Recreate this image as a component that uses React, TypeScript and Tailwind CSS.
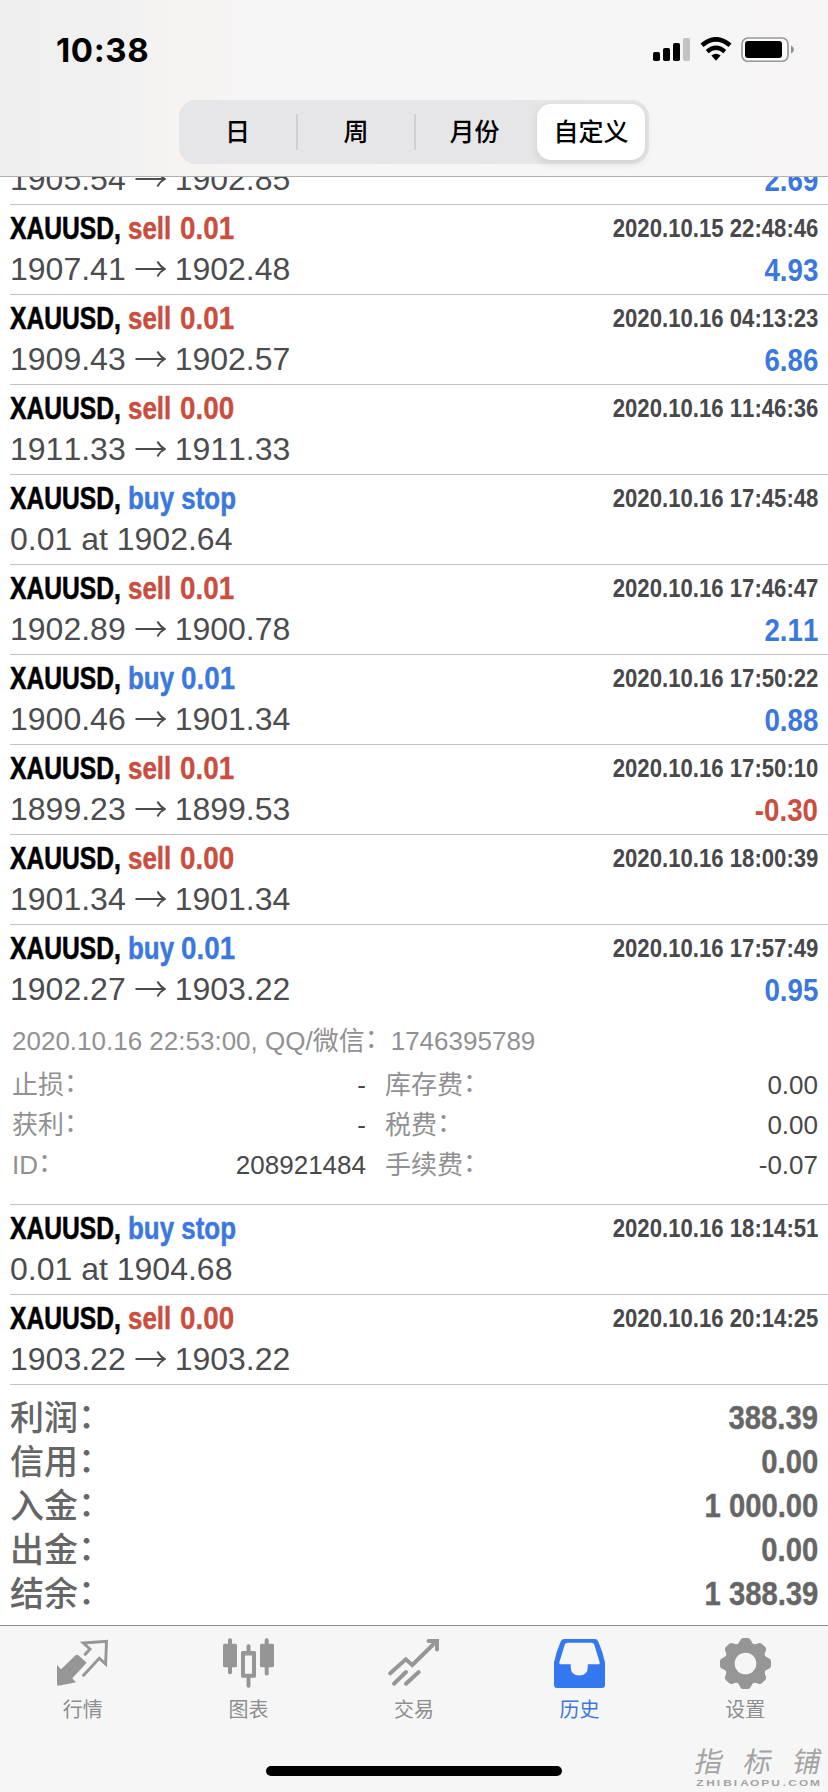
import React from 'react';
import clsx from 'clsx';

interface Deal {
  side: 'buy' | 'sell';
  action: string;
  volume?: string;
  time?: string;
  open?: string;
  close?: string;
  note?: string;
  profit?: string;
  expanded?: boolean;
}

const deals: Deal[] = [
  // scrolled under the header, only the price line is left
  { side: 'sell', action: 'sell', volume: '0.01', open: '1905.54', close: '1902.85', profit: '2.69' },
  { side: 'sell', action: 'sell', volume: '0.01', time: '2020.10.15 22:48:46', open: '1907.41', close: '1902.48', profit: '4.93' },
  { side: 'sell', action: 'sell', volume: '0.01', time: '2020.10.16 04:13:23', open: '1909.43', close: '1902.57', profit: '6.86' },
  { side: 'sell', action: 'sell', volume: '0.00', time: '2020.10.16 11:46:36', open: '1911.33', close: '1911.33' },
  { side: 'buy', action: 'buy stop', time: '2020.10.16 17:45:48', note: '0.01 at 1902.64' },
  { side: 'sell', action: 'sell', volume: '0.01', time: '2020.10.16 17:46:47', open: '1902.89', close: '1900.78', profit: '2.11' },
  { side: 'buy', action: 'buy', volume: '0.01', time: '2020.10.16 17:50:22', open: '1900.46', close: '1901.34', profit: '0.88' },
  { side: 'sell', action: 'sell', volume: '0.01', time: '2020.10.16 17:50:10', open: '1899.23', close: '1899.53', profit: '-0.30' },
  { side: 'sell', action: 'sell', volume: '0.00', time: '2020.10.16 18:00:39', open: '1901.34', close: '1901.34' },
  { side: 'buy', action: 'buy', volume: '0.01', time: '2020.10.16 17:57:49', open: '1902.27', close: '1903.22', profit: '0.95', expanded: true },
  { side: 'buy', action: 'buy stop', time: '2020.10.16 18:14:51', note: '0.01 at 1904.68' },
  { side: 'sell', action: 'sell', volume: '0.00', time: '2020.10.16 20:14:25', open: '1903.22', close: '1903.22' },
];

const totals = [
  { label: '利润', value: '388.39' },
  { label: '信用', value: '0.00' },
  { label: '入金', value: '1 000.00' },
  { label: '出金', value: '0.00' },
  { label: '结余', value: '1 388.39' },
];

const details = [
  { label: '止损', value: '-', label2: '库存费', value2: '0.00' },
  { label: '获利', value: '-', label2: '税费', value2: '0.00' },
  { label: 'ID', value: '208921484', label2: '手续费', value2: '-0.07' },
];

const StatusBar = () => (
  <div className="flex h-[100px] items-start justify-between pl-[56px] pr-[33px]">
    <span className="mt-[30px] font-['Inter'] text-[33px] font-bold leading-[40px] tracking-[0.6px] text-black">10:38</span>
    <div className="mt-[37px] flex items-start">
      <svg width="38" height="25" viewBox="0 0 38 25">
        <rect x="0" y="15" width="7" height="9" rx="1.8" />
        <rect x="10" y="11" width="7" height="13" rx="1.8" />
        <rect x="20" y="6" width="7" height="18" rx="1.8" />
        <rect x="30" y="1" width="7" height="23" rx="1.8" fill="#c3c3c4" />
      </svg>
      <svg className="ml-[9px]" width="32" height="25" viewBox="0 0 32 25">
        <path d="M2 8.3 Q16 -3.7 30 8.3" fill="none" stroke="#000" strokeWidth="4.6" />
        <path d="M7.2 14.6 Q16 7 24.8 14.6" fill="none" stroke="#000" strokeWidth="4.4" />
        <path d="M11.4 18.6 Q16 15 20.6 18.6 L16 23.8 Z" />
      </svg>
      <svg className="ml-[9px]" width="54" height="25" viewBox="0 0 54 25">
        <rect x="1" y="1" width="46" height="23.4" rx="6" fill="#fff" fillOpacity="0.6" stroke="#98989a" strokeWidth="1.7" />
        <rect x="4" y="4" width="37" height="17" rx="3" />
        <path d="M50 8.6 Q53 10 53 12.5 T50 16.6 Z" fill="#909092" />
      </svg>
    </div>
  </div>
);

const Segments = () => (
  <div className="ml-[179px] flex h-16 w-[470px] items-center rounded-[17px] bg-[#e6e5e7] text-center text-[25px] font-medium leading-[36px] text-black">
    <span className="w-[117px]">日</span>
    <span className="h-9 w-[2px] bg-[#cfcfd2]" />
    <span className="w-[116px]">周</span>
    <span className="h-9 w-[2px] bg-[#cfcfd2]" />
    <span className="w-[117px]">月份</span>
    <span className="ml-[4px] flex h-14 w-[108px] items-center justify-center rounded-[14px] bg-white shadow-[0_3px_10px_rgba(0,0,0,0.10)]">
      自定义
    </span>
  </div>
);

const Arrow = () => (
  <svg className="mx-[9px]" width="31" height="20" viewBox="0 0 31 20" fill="none" stroke="#4c4c4f" strokeWidth="1.9">
    <path d="M0.5 10 H30 M22.5 2.5 Q25 7.5 30 10 Q25 12.5 22.5 17.5" />
  </svg>
);

// full-width colon, raised to the middle of the characters
const Colon = () => <span className="relative -top-[2px]">：</span>;

const DealDetails = () => (
  <div className="h-[190px] border-b border-[#c2c2c4] pt-[4px] text-[26px] text-[#919193]">
    <p className="pl-[2px] leading-[44px]">
      2020.10.16 22:53:00, QQ/微信<Colon />1746395789
    </p>
    <div className="pt-[2px]">
      {details.map((d) => (
        <div key={d.label} className="flex pl-[2px] pr-[10px] leading-[40px]">
          <span>{d.label}<Colon /></span>
          <span className="ml-auto text-[#48484b]">{d.value}</span>
          <span className="ml-[19px] w-[200px]">{d.label2}<Colon /></span>
          <span className="w-[233px] text-right text-[#48484b]">{d.value2}</span>
        </div>
      ))}
    </div>
  </div>
);

const DealRow: React.FC<{ deal: Deal }> = ({ deal }) => {
  const tone = deal.side === 'buy' ? 'text-[#3b78de]' : 'text-[#cb4d3d]';
  const profitTone = deal.profit?.startsWith('-') ? 'text-[#cb4d3d]' : 'text-[#3b78de]';

  return (
    <div className="ml-[10px]">
      <div className={clsx(deal.time ? 'h-[90px] pt-[3px]' : 'h-[46px]', !deal.expanded && 'border-b border-[#c2c2c4]')}>
        {deal.time && (
          <div className="flex h-[41px] whitespace-nowrap text-[32px] font-bold leading-[41px]">
            <span className="w-[118px] origin-left scale-x-[0.77] text-black [-webkit-text-stroke:0.6px]">XAUUSD,</span>
            <span className={clsx('origin-left scale-x-[0.81] [-webkit-text-stroke:0.5px]', tone, deal.side === 'buy' ? 'w-[53px]' : 'w-[52px]')}>
              {deal.action}
            </span>
            {deal.volume && <span className={clsx('origin-left scale-x-[0.87] [-webkit-text-stroke:0.3px]', tone)}>{deal.volume}</span>}
            <span className="ml-auto mr-[10px] origin-right scale-x-[0.852] text-[26px] leading-[40px] text-[#48484b]">{deal.time}</span>
          </div>
        )}
        <div className="flex h-[40px] items-center text-[32px] leading-[40px] text-[#4c4c4f]">
          {deal.note ? (
            <span>{deal.note}</span>
          ) : (
            <>
              <span>{deal.open}</span>
              <Arrow />
              <span>{deal.close}</span>
            </>
          )}
          <span className={clsx('ml-auto mr-[10px] origin-right scale-x-[0.865] pt-[2px] font-bold', profitTone)}>{deal.profit}</span>
        </div>
      </div>
      {deal.expanded && <DealDetails />}
    </div>
  );
};

const QuotesIcon = () => (
  <svg width="51" height="51" viewBox="0 0 51 51">
    <path d="M0 27 L4 31.3 L18.3 17.4 Q20 16 21.7 17.4 L29.7 24.7 L15.3 40.3 L19 44.3 L1.5 47.7 Q0 47.7 0 46 Z" fill="#969696" />
    <path d="M27.3 17.3 L33 11 L26.3 5 L49.5 3.2 L48.6 26 L42.3 20.2 L25.7 38.2" fill="none" stroke="#969696" strokeWidth="2.9" />
  </svg>
);

const ChartIcon = () => (
  <svg width="51" height="51" viewBox="0 0 51 51" fill="#969696">
    <rect x="0" y="5.7" width="14" height="23.6" rx="1.5" />
    <rect x="5" y="0.3" width="4" height="36" rx="1.8" />
    <path fillRule="evenodd" d="M19.5 13 H31.5 Q33 13 33 14.5 V38.2 Q33 39.7 31.5 39.7 H19.5 Q18 39.7 18 38.2 V14.5 Q18 13 19.5 13 Z M22 17.5 V35.7 H29 V17.5 Z" />
    <rect x="23.5" y="6.3" width="4" height="9" rx="1.8" />
    <rect x="23.5" y="37.5" width="4" height="12.3" rx="1.8" />
    <rect x="37" y="5.7" width="14" height="23.6" rx="1.5" />
    <rect x="41.7" y="0.3" width="4" height="37.2" rx="1.8" />
  </svg>
);

const TradeIcon = () => (
  <svg width="51" height="51" viewBox="0 0 51 51" fill="none" stroke="#969696" strokeWidth="4" strokeLinecap="round">
    <path d="M2.3 35.3 L17.7 21.3 L24.3 27 L48 3.8" />
    <path d="M40.5 3 H49 V11.5" />
    <path d="M6 45.7 L18 34 M18 45.7 L30.7 34" />
  </svg>
);

const HistoryIcon = () => (
  <svg width="51" height="51" viewBox="0 0 51 51" fill="#3478f0">
    <path
      fillRule="evenodd"
      d="M10.5 1 H40.5 Q43.3 1 44.3 3.4 Q49 14 51 24.5 V47 Q51 50 48 50 H3 Q0 50 0 47 V24.5 Q2 14 6.7 3.4 Q7.7 1 10.5 1 Z M13.5 4.7 Q11.5 4.7 10.8 6.5 L5.3 24.5 Q5 26.3 6.5 26.3 H16.7 V29 Q16.7 37.5 25.2 37.5 Q33.8 37.5 33.8 29 V26.3 H44.5 Q46 26.3 45.7 24.5 L40.2 6.5 Q39.5 4.7 37.5 4.7 Z"
    />
  </svg>
);

const SettingsIcon = () => (
  <svg width="51" height="51" viewBox="0 0 51 51" fill="#969696">
    <circle cx="25.5" cy="25.5" r="21" />
    {[0, 45, 90, 135].map((angle) => (
      <path
        key={angle}
        transform={`rotate(${angle} 25.5 25.5)`}
        d="M16 8 Q18.8 6 20 2.6 Q20.8 0 23.3 0 H27.7 Q30.2 0 31 2.6 Q32.2 6 35 8 V43 Q32.2 45 31 48.4 Q30.2 51 27.7 51 H23.3 Q20.8 51 20 48.4 Q18.8 45 16 43 Z"
      />
    ))}
    <circle cx="25.5" cy="25.5" r="10.8" fill="#f6f6f6" />
  </svg>
);

const tabs = [
  { label: '行情', icon: <QuotesIcon /> },
  { label: '图表', icon: <ChartIcon /> },
  { label: '交易', icon: <TradeIcon /> },
  { label: '历史', icon: <HistoryIcon />, active: true },
  { label: '设置', icon: <SettingsIcon /> },
];

export default function App() {
  return (
    <div className="relative flex h-[1792px] w-[828px] flex-col overflow-hidden bg-white font-['Liberation_Sans','Noto_Sans_CJK_SC',sans-serif] [font-kerning:none]">
      <header className="h-[177px] shrink-0 border-b border-[#b0b0b2] bg-[linear-gradient(90deg,#efefef_0%,#f1f1f1_14%,#f6f3f2_21%,#f6f5f5_32%,#f6f6f7_80%,#f7f4f4_100%)]">
        <StatusBar />
        <Segments />
      </header>

      <main className="flex-1 overflow-hidden">
        <div className="-mt-[18px]">
          {deals.map((deal, i) => (
            <DealRow key={i} deal={deal} />
          ))}
        </div>

        {/* Account totals */}
        <div className="pl-[10px] pr-[10px] pt-[10px] text-[#666]">
          {totals.map((t) => (
            <div key={t.label} className="flex h-[44px] items-center justify-between text-[34px] leading-[44px]">
              <span className="pt-[1px] font-medium">{t.label}<Colon /></span>
              <span className="origin-right scale-x-[0.86] font-bold [-webkit-text-stroke:0.4px]">{t.value}</span>
            </div>
          ))}
        </div>
      </main>

      <nav className="h-[167px] shrink-0 border-t border-[#8f8f91] bg-[#f6f6f6]">
        <div className="flex h-[140px] pt-[12px]">
          {tabs.map((tab) => (
            <div key={tab.label} className={clsx('flex flex-1 flex-col items-center', tab.active ? 'text-[#3b78de]' : 'text-[#8e8e90]')}>
              {tab.icon}
              <span className="mt-[6px] text-[20px] leading-[30px]">{tab.label}</span>
            </div>
          ))}
        </div>
        <div className="mx-auto h-[10px] w-[296px] rounded-full bg-black" />
      </nav>

      {/* Site watermark */}
      <div className="absolute bottom-[5px] right-[7px] w-[126px] text-[#a3a3a3]">
        <div className="flex -skew-x-12 justify-between text-[28px] leading-[30px]">
          <span>指</span>
          <span>标</span>
          <span>铺</span>
        </div>
        <div className="flex justify-between px-[2px] text-[9.5px] font-bold leading-[9px]">
          {'ZHIBIAOPU.COM'.split('').map((ch, i) => (
            <span key={i} className="scale-x-125">{ch}</span>
          ))}
        </div>
      </div>
    </div>
  );
}
